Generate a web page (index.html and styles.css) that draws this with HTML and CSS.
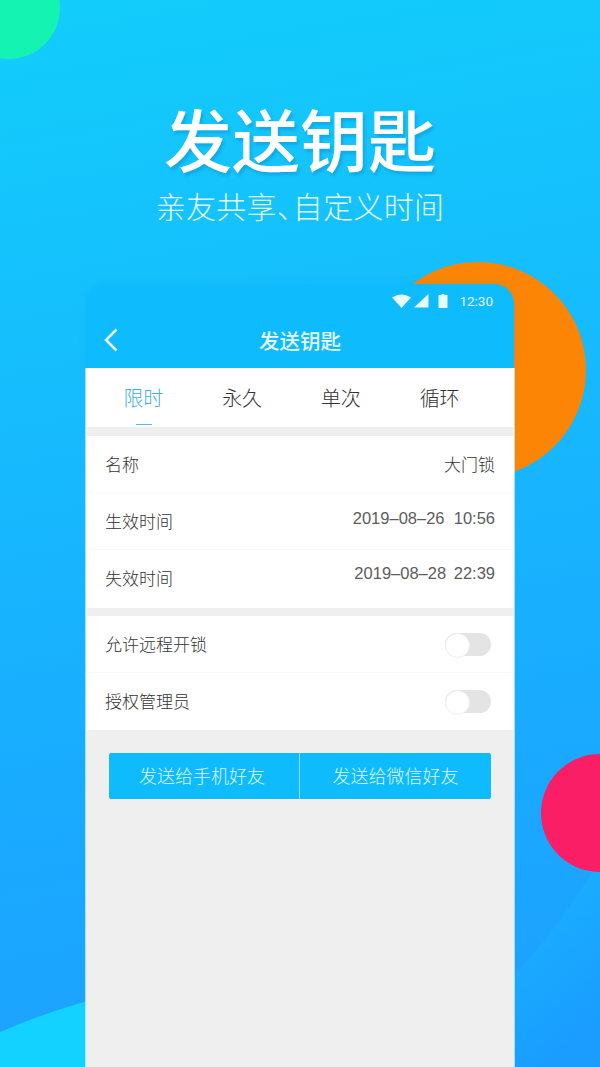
FILE: index.html
```html
<!DOCTYPE html>
<html lang="zh">
<head>
<meta charset="utf-8">
<title>发送钥匙</title>
<link rel="stylesheet" href="styles.css">
</head>
<body>
<div class="screen">
  <svg class="waves" width="600" height="1067" viewBox="0 0 600 1067">
    <defs>
      <linearGradient id="waveR" x1="0" y1="0" x2="0.6" y2="1"><stop offset="0" stop-color="#19baff"/><stop offset="1" stop-color="#1a9dff"/></linearGradient>
    </defs>
    <path d="M0 1032Q60 1006 130 990L130 1067H0Z" fill="#14d2ff"/>
    <path d="M450 1067V1040Q540 960 600 860V1067Z" fill="url(#waveR)"/>
  </svg>
  <div class="blob blob-green"></div>
  <div class="blob blob-orange"></div>
  <div class="blob blob-red"></div>
  <header class="hero">
    <h1 class="hero-title">发送钥匙</h1>
    <p class="hero-sub">亲友共享<span class="comma">、</span>自定义时间</p>
  </header>
  <main class="phone">
    <div class="appbar">
      <div class="status">
        <svg class="st-wifi" width="20" height="14" viewBox="0 0 20 14"><path d="M0 3.500Q9.500-2.500 19 3.500L9.500 14Z" fill="#e6faff"/></svg>
        <svg class="st-signal" width="16" height="14" viewBox="0 0 16 14"><path d="M15.500 0V13.500H1Z" fill="#e6faff"/></svg>
        <svg class="st-batt" width="10" height="14" viewBox="0 0 10 14"><path d="M3.500 0H6.500V1H9.500V14H.5V1H3.500Z" fill="#e6faff"/></svg>
        <span class="st-time">12:30</span>
      </div>
      <div class="nav">
        <svg class="nav-back" width="16" height="24" viewBox="0 0 16 24"><path d="M13.500 1.500L3 12L13.500 22.500" fill="none" stroke="#e6faff" stroke-width="2.500"/></svg>
        <span class="nav-title">发送钥匙</span>
      </div>
    </div>
    <div class="sheet">
      <div class="tabs">
        <div class="tab tab-on">限时</div>
        <div class="tab">永久</div>
        <div class="tab">单次</div>
        <div class="tab">循环</div>
      </div>
      <section class="group group-first">
        <div class="row"><span>名称</span><span class="val">大门锁</span></div>
        <div class="row"><span>生效时间</span><span class="val val-num val-a">2019–08–26&nbsp;&nbsp;10:56</span></div>
        <div class="row"><span>失效时间</span><span class="val val-num val-b">2019–08–28 22:39</span></div>
      </section>
      <section class="group">
        <div class="row"><span>允许远程开锁</span><span class="switch"></span></div>
        <div class="row"><span>授权管理员</span><span class="switch"></span></div>
      </section>
      <div class="actions">
        <div class="act">发送给手机好友</div>
        <div class="act">发送给微信好友</div>
      </div>
    </div>
  </main>
</div>
</body>
</html>
```
FILE: styles.css
```css
* { box-sizing: border-box; }
html, body { margin: 0; padding: 0; }
body { font-family: "Noto Sans CJK SC", "Liberation Sans", sans-serif; }
.screen {
  position: relative;
  width: 600px;
  height: 1067px;
  overflow: hidden;
  background: linear-gradient(170deg, #12cdfb 0%, #16bcfd 35%, #1aa8ff 75%, #1e9fff 100%);
  display: flex;
  flex-direction: column;
  align-items: center;
}
.waves { position: absolute; left: 0; top: 0; }
.blob { position: absolute; border-radius: 50%; }
.blob-green { left: -42px; top: -43px; width: 102px; height: 102px; background: #14f3b2; }
.blob-orange { left: 370px; top: 262px; width: 216px; height: 216px; background: #fc8505; }
.blob-red { left: 541px; top: 754px; width: 118px; height: 118px; background: #f91e66; }
.hero { position: relative; text-align: center; padding-top: 96px; height: 284px; }
.hero-title { margin: 0; font-size: 68px; line-height: 84px; font-weight: 500; color: #fff; text-shadow: 2px 3px 3px rgba(0,90,170,.25); }
.hero-sub { margin: 3px 0 0; font-size: 30px; line-height: 44px; font-weight: 300; letter-spacing: .3px; color: #e2f8ff; }
.comma { letter-spacing: -14px; }
.phone {
  position: relative;
  width: 428px;
  flex: 1;
  display: flex;
  flex-direction: column;
}
.appbar { background: #0ebbfd; border-radius: 20px 20px 0 0; box-shadow: 0 -2px 8px rgba(0,150,230,.12); }
.sheet { flex: 1; background: #efefef; box-shadow: -1px 0 0 rgba(190,240,255,.8), 1px 0 0 rgba(190,240,255,.8); }
.status { height: 28px; padding: 5px 21px 0 0; display: flex; align-items: center; justify-content: flex-end; }
.st-signal { margin-left: 1px; }
.st-batt { margin-left: 9px; }
.st-time { margin-left: 11px; font-family: "Roboto", sans-serif; font-size: 13.500px; color: #e4f8ff; }
.nav { position: relative; height: 56px; display: flex; align-items: center; justify-content: center; }
.nav-back { position: absolute; left: 17px; top: 16px; }
.nav-title { font-size: 20.500px; font-weight: 500; color: #e6f9ff; }
.tabs { height: 59px; background: #fff; display: flex; padding: 0 25px 0 8px; }
.tab { position: relative; flex: 1; display: flex; align-items: center; justify-content: center; font-size: 20px; font-weight: 300; color: #333; }
.tab-on { color: #3fb0d8; }
.tab-on::after { content: ""; position: absolute; left: 42px; bottom: 2px; width: 16px; height: 1px; background: #5bc0e0; }
.group { margin-top: 8px; background: #fff; }
.group-first { margin-top: 9px; padding-bottom: 1px; }
.row { height: 57px; display: flex; align-items: center; justify-content: space-between; padding: 0 19px 2px; font-size: 17px; font-weight: 300; color: #333; border-bottom: 1px solid #f8f8f8; }
.row:last-child { border-bottom: 0; }
.val-num { font-family: "Liberation Sans", sans-serif; font-size: 16.500px; font-weight: 400; color: #5c5c5c; }
.val-a { margin-top: -3px; }
.val-b { margin-top: -9px; word-spacing: 3px; }
.switch { position: relative; width: 46px; height: 23px; border-radius: 12px; background: #e4e4e4; margin: 2px 4px 0 0; }
.switch::after { content: ""; position: absolute; left: 0; top: 0; width: 23px; height: 23px; border-radius: 50%; background: #fff; border: 1px solid #eee; }
.actions { margin: 23px 23px 0; height: 46px; display: flex; border-radius: 2px; overflow: hidden; background: #0ebbfd; }
.act { flex: 0 0 190px; display: flex; align-items: center; justify-content: center; padding: 0 4px 2px 0; font-size: 18px; font-weight: 300; color: #dff6ff; }
.act + .act { flex: 1; padding-right: 0; border-left: 1px solid #8fdcf8; }
```
